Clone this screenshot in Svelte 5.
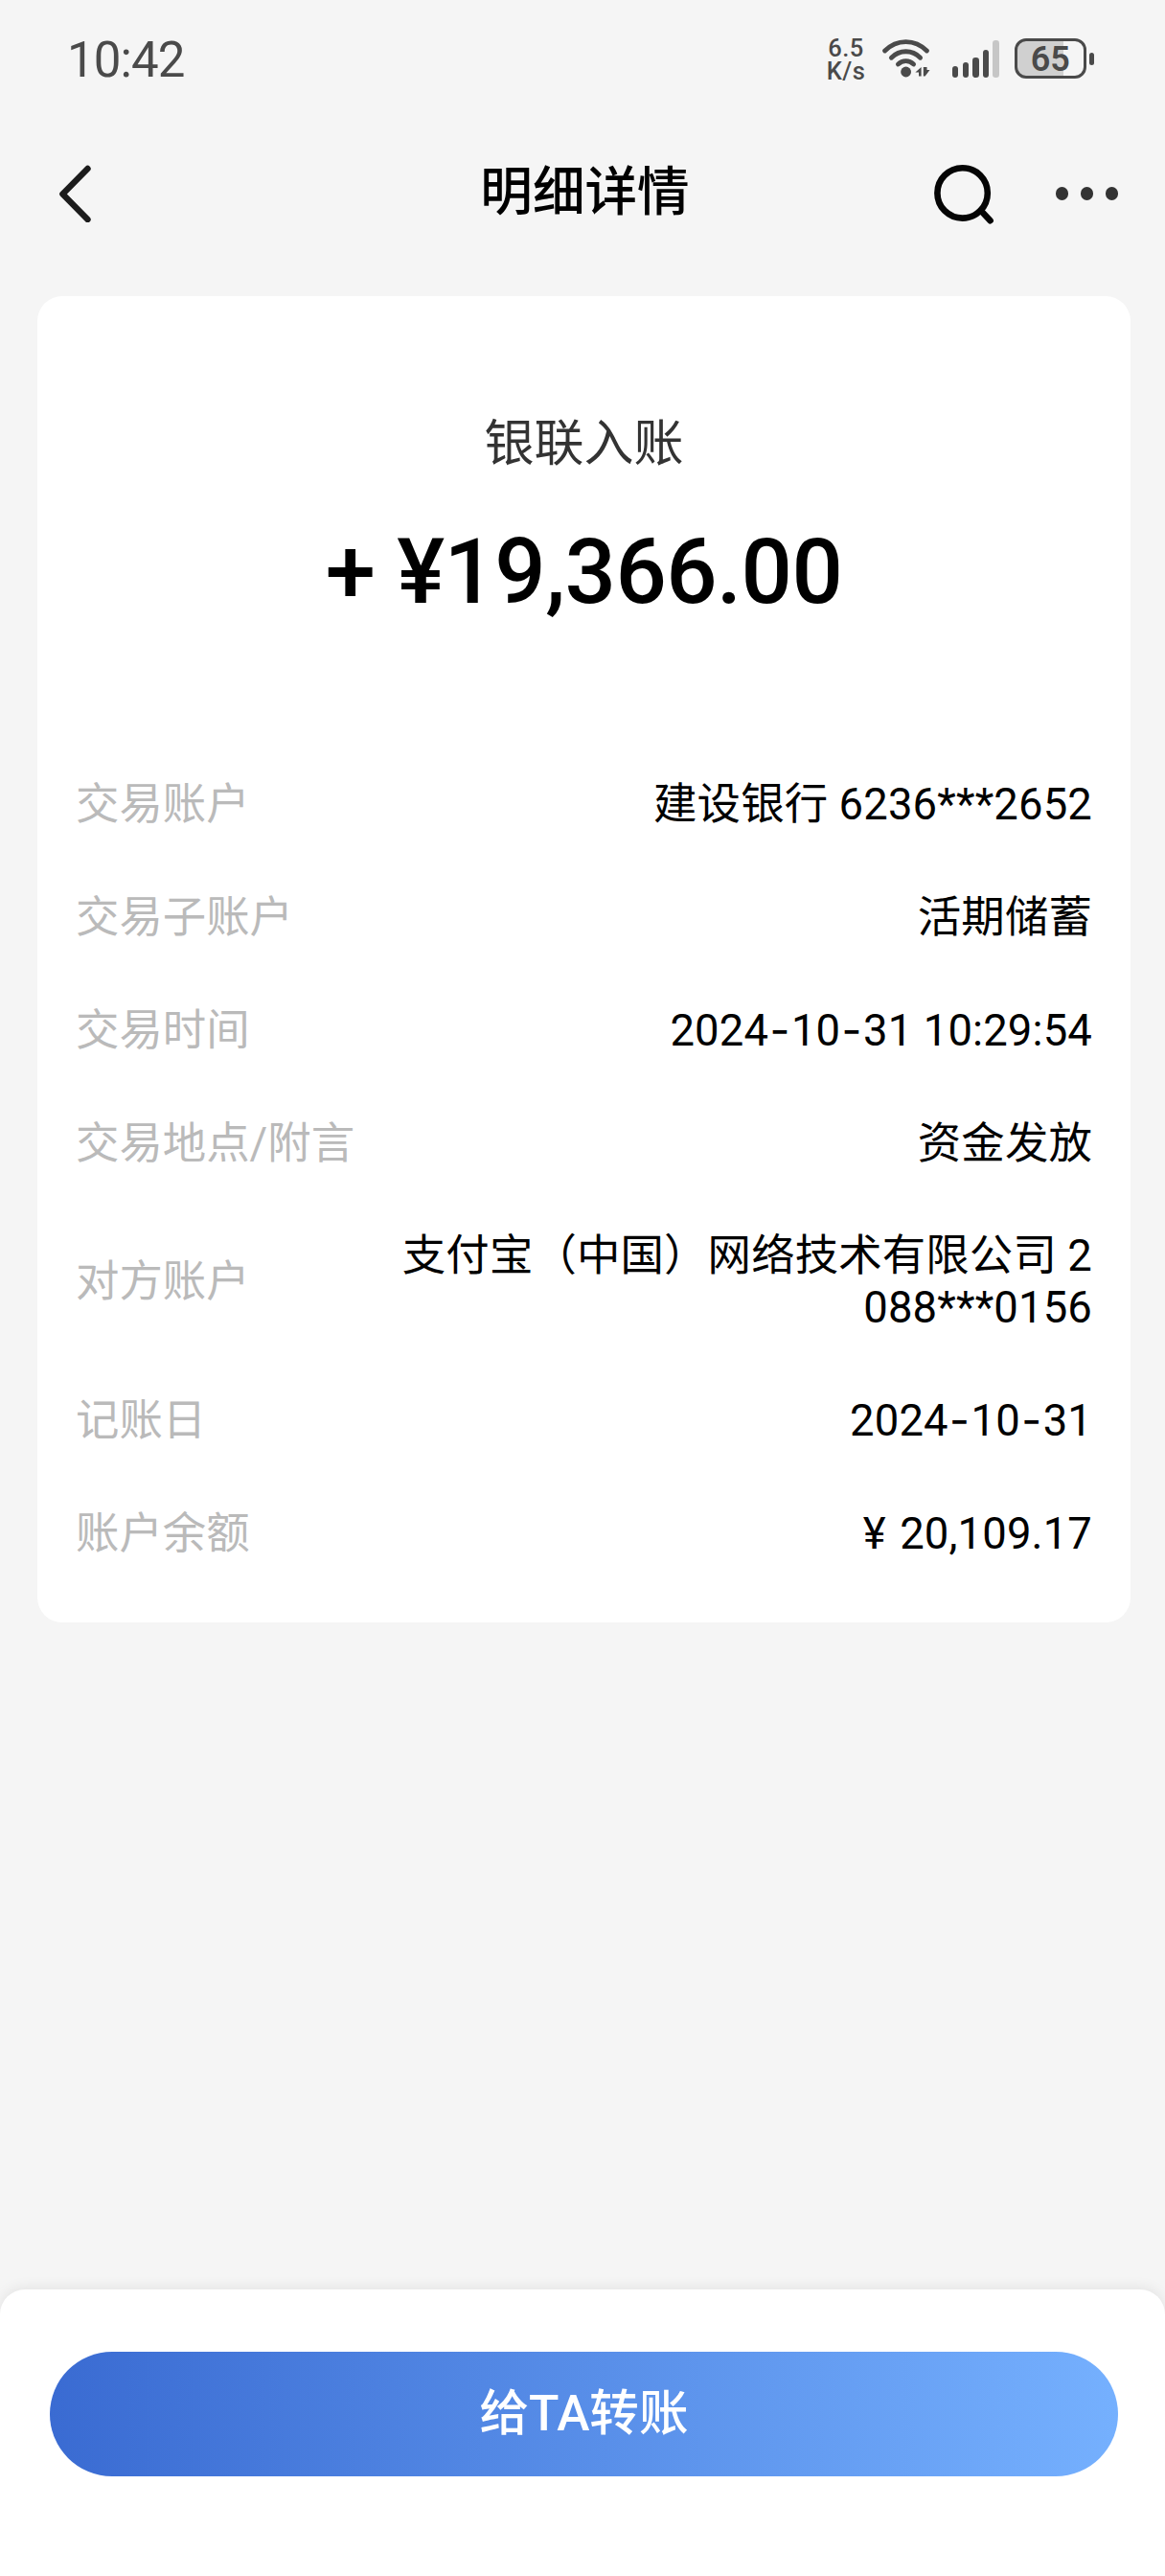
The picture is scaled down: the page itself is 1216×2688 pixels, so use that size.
<script lang="ts">
  const details = [
    { label: '交易账户', value: '建设银行 6236***2652' },
    { label: '交易子账户', value: '活期储蓄' },
    { label: '交易时间', value: '2024-10-31 10:29:54' },
    { label: '交易地点/附言', value: '资金发放' },
    { label: '对方账户', value: '支付宝（中国）网络技术有限公司 2088***0156' },
    { label: '记账日', value: '2024-10-31' },
    { label: '账户余额', value: '¥ 20,109.17' }
  ];
  const bars = [12, 16, 21, 29, 39];
</script>

<div class="screen">
  <div class="status">
    <span class="time">10:42</span>
    <div class="speed"><span>6.5</span><span>K/s</span></div>
    <svg class="wifi" width="50" height="42" viewBox="0 0 50 42">
      <g fill="none" stroke="#4a4a4a" stroke-width="4.8" stroke-linecap="round">
        <path d="M2.6 13C15 .4 34 .4 46.4 13" />
        <path d="M9.4 20.2C18 11.6 31 11.6 39.6 20.2" />
        <path d="M16.4 27C21 22.6 28 22.6 32.6 27" />
      </g>
      <circle cx="24.6" cy="35" r="5.4" fill="#4a4a4a" />
      <path d="M40.6 30v9.5h-2.6v-4h-3.6zM42.8 30v9.5h1.8l4.9-6.5h-3v-3z" fill="#4a4a4a" />
    </svg>
    <div class="signal">
      {#each bars as h}
        <i style="height: {h}px"></i>
      {/each}
    </div>
    <div class="battery"><span>65</span></div>
    <div class="nub"></div>
  </div>

  <header>
    <button class="back" aria-label="返回">
      <svg width="34" height="60" viewBox="0 0 34 60">
        <path d="M29.5 4L3.4 30.5L29.5 57" fill="none" stroke="#1c1c1c" stroke-width="6.4" stroke-linecap="round" stroke-linejoin="round" />
      </svg>
    </button>
    <h1>明细详情</h1>
    <div class="actions">
      <button aria-label="搜索">
        <svg width="64" height="64" viewBox="0 0 64 64">
          <g fill="none" stroke="#050505" stroke-width="6.6" stroke-linecap="round">
            <circle cx="29.6" cy="31.4" r="26.2" />
            <path d="M49.5 50.5L58.6 60.2" />
          </g>
        </svg>
      </button>
      <button class="more" aria-label="更多"><i></i><i></i><i></i></button>
    </div>
  </header>

  <main class="card">
    <p class="kind">银联入账</p>
    <p class="amount">+ ¥19,366.00</p>
    <dl>
      {#each details as item}
        <div class="row">
          <dt>{item.label}</dt>
          <dd>{#each item.value.split(/([-¥])/) as part}{#if part === '-'}<span class="dash">-</span>{:else if part === '¥'}<span class="yen">¥</span>{:else}{part}{/if}{/each}</dd>
        </div>
      {/each}
    </dl>
  </main>

  <footer>
    <button class="transfer">给TA转账</button>
  </footer>
</div>

<style>
:global(body) { background: #f5f5f5; }
.screen {
  width: 1216px; height: 2688px; background: #f5f5f5; overflow: hidden;
  display: flex; flex-direction: column;
  font-family: Roboto, "Noto Sans CJK SC", sans-serif; color: #000;
}
button { border: 0; padding: 0; background: none; font: inherit; color: inherit; }
svg { display: block; }
.status {
  height: 122px; padding: 0 74px 0 70px; box-sizing: border-box;
  display: flex; align-items: center; color: #4a4a4a;
}
.time {
  font-size: 51px; line-height: 60px; letter-spacing: -0.9px;
  margin-right: auto; padding-top: 3px;
}
.speed {
  width: 38px; display: flex; flex-direction: column; align-items: center;
  font-size: 25.5px; line-height: 24px; letter-spacing: 0.5px; font-weight: 500; padding-top: 1px;
}
.wifi { margin-left: 19px; }
.signal { margin-left: 23px; height: 39px; display: flex; align-items: flex-end; gap: 4.3px; }
.signal i { width: 6.3px; border-radius: 3.2px; background: #4a4a4a; }
.signal i:last-child { background: #c6c6c6; }
.battery {
  margin-left: 16px; width: 75px; height: 42px; box-sizing: border-box;
  border: 3.2px solid #4a4a4a; border-radius: 12px;
  background: linear-gradient(90deg, #d0d0d0 70%, #f5f5f5 70%);
  font-size: 36px; font-weight: 600; line-height: 38px; text-align: center;
}
.nub { margin-left: 3px; width: 5.3px; height: 13px; border-radius: 3px; background: #4a4a4a; }
header {
  height: 160px; margin-bottom: 27px; padding: 0 49px 0 62px;
  display: grid; grid-template-columns: 1fr auto 1fr; align-items: center;
}
h1 { margin: 0 8px 4px 0; font-size: 54.6px; line-height: 64px; font-weight: 500; }
.actions { display: flex; justify-content: flex-end; align-items: center; gap: 63px; }
.more { display: flex; gap: 12.6px; }
.more i { width: 13.3px; height: 13.3px; border-radius: 50%; background: #333; }
.card {
  margin: 0 36px 0 39px; height: 1384px; box-sizing: border-box; padding: 125px 40px 0;
  background: #fff; border-radius: 26px;
}
p { margin: 0; text-align: center; }
.kind { font-size: 52px; line-height: 60px; color: #333; }
.amount {
  margin-top: 48px; font-size: 94px; line-height: 110px;
  font-weight: 500; letter-spacing: -0.6px;
}
dl { margin: 161px 0 0; display: flex; flex-direction: column; gap: 64.2px; }
.row {
  display: flex; justify-content: space-between; align-items: center;
  font-size: 45.4px; line-height: 53.4px;
}
dt { color: #bababa; }
dd { margin: 0; width: 724px; text-align: right; word-break: break-all; letter-spacing: 0.15px; }
.dash { font-family: Inter, sans-serif; margin: 0 1.4px; }
.yen { margin-right: 3px; }
footer {
  margin-top: auto; height: 299px; box-sizing: border-box; padding: 65px 49px 0 52px;
  background: #fff; border-radius: 26px 26px 0 0; box-shadow: 0 -2px 14px rgba(0, 0, 0, 0.08);
}
.transfer {
  width: 100%; height: 130px; border-radius: 65px; color: #fff;
  background: linear-gradient(90deg, #3a6bd2, #75b0fe);
  font-size: 51.6px; font-weight: 500; padding-bottom: 12px;
}
</style>
